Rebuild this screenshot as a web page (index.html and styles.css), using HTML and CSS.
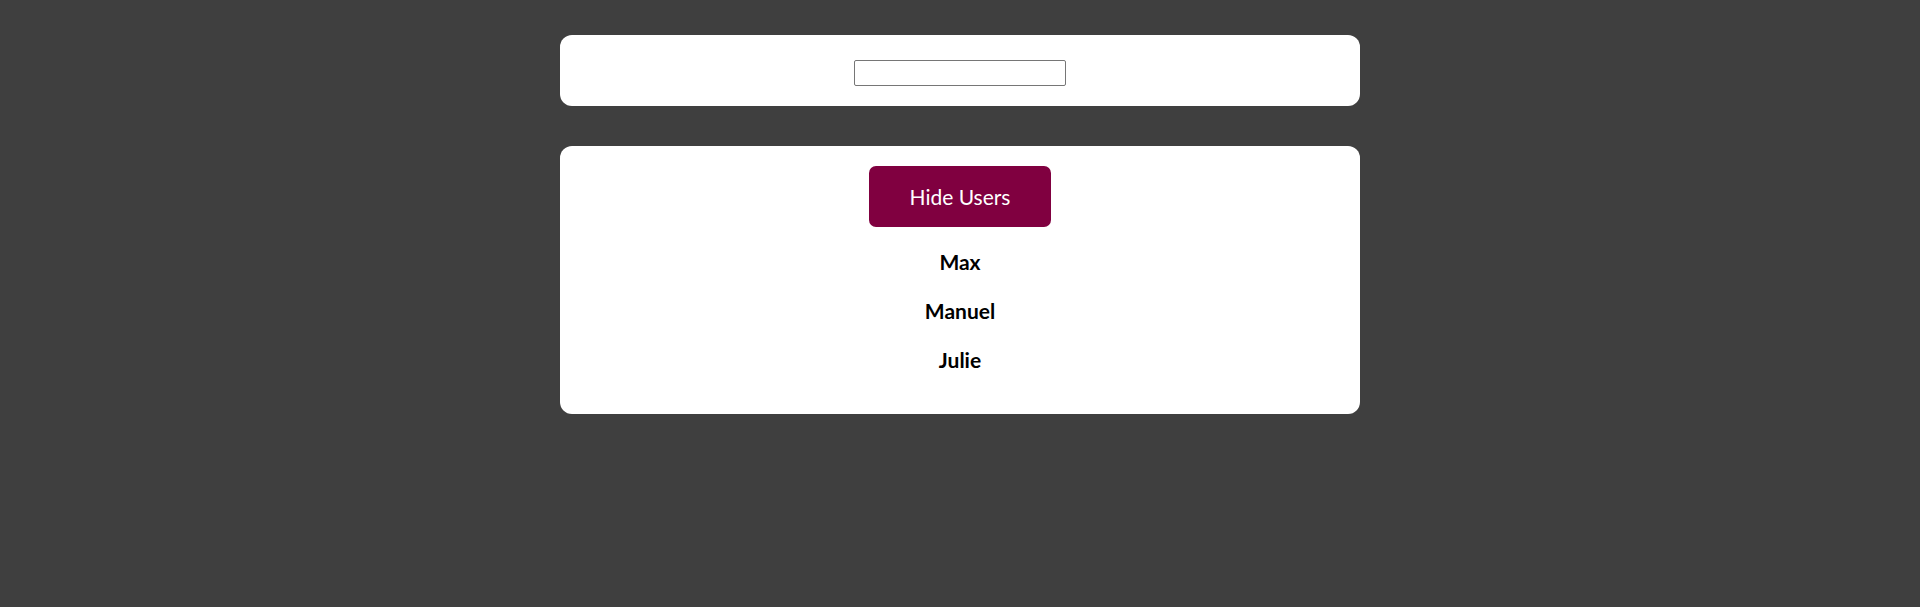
FILE: index.html
```html
<!DOCTYPE html>
<html lang="en">
<head>
<meta charset="utf-8">
<title>Users</title>
<link rel="stylesheet" href="styles.css">
</head>
<body>
<main class="page">
  <section class="card filter">
    <input class="filter-input" type="search" aria-label="Filter users">
  </section>
  <section class="card users">
    <button class="toggle" type="button">Hide Users</button>
    <ul class="user-list">
      <li class="user">Max</li>
      <li class="user">Manuel</li>
      <li class="user">Julie</li>
    </ul>
  </section>
</main>
</body>
</html>
```

FILE: styles.css
```css
html, body {
  margin: 0;
  padding: 0;
  background: #3f3f3f;
  font-family: Lato, "Noto Sans", sans-serif;
}

.page {
  display: flex;
  flex-direction: column;
  align-items: center;
  gap: 40px;
  padding-top: 35px;
}

.card {
  box-sizing: border-box;
  width: 800px;
  background: #ffffff;
  border-radius: 12px;
  display: flex;
  flex-direction: column;
  align-items: center;
}

.filter {
  height: 71px;
  padding: 25px 0 20px;
}

.filter-input {
  box-sizing: border-box;
  width: 212px;
  height: 26px;
  margin: 0;
  padding: 1px 2px;
  border: 1px solid #767676;
  border-radius: 2px;
  background: #fff;
  font: 13px Arial, "Liberation Sans", sans-serif;
  -webkit-appearance: none;
  appearance: none;
}

.users {
  height: 268px;
  padding-top: 20px;
}

.toggle {
  box-sizing: border-box;
  width: 182px;
  height: 61px;
  margin: 0;
  border: 0;
  border-radius: 7px;
  background: #800040;
  color: #ffffff;
  font-family: Lato, "Noto Sans", sans-serif;
  font-size: 21px;
  cursor: pointer;
}

.user-list {
  list-style: none;
  margin: 20px 0 0;
  padding: 0;
  display: flex;
  flex-direction: column;
  align-items: center;
  gap: 19px;
}

.user {
  font-size: 21px;
  font-weight: 700;
  line-height: 30px;
  color: #000;
}
```
